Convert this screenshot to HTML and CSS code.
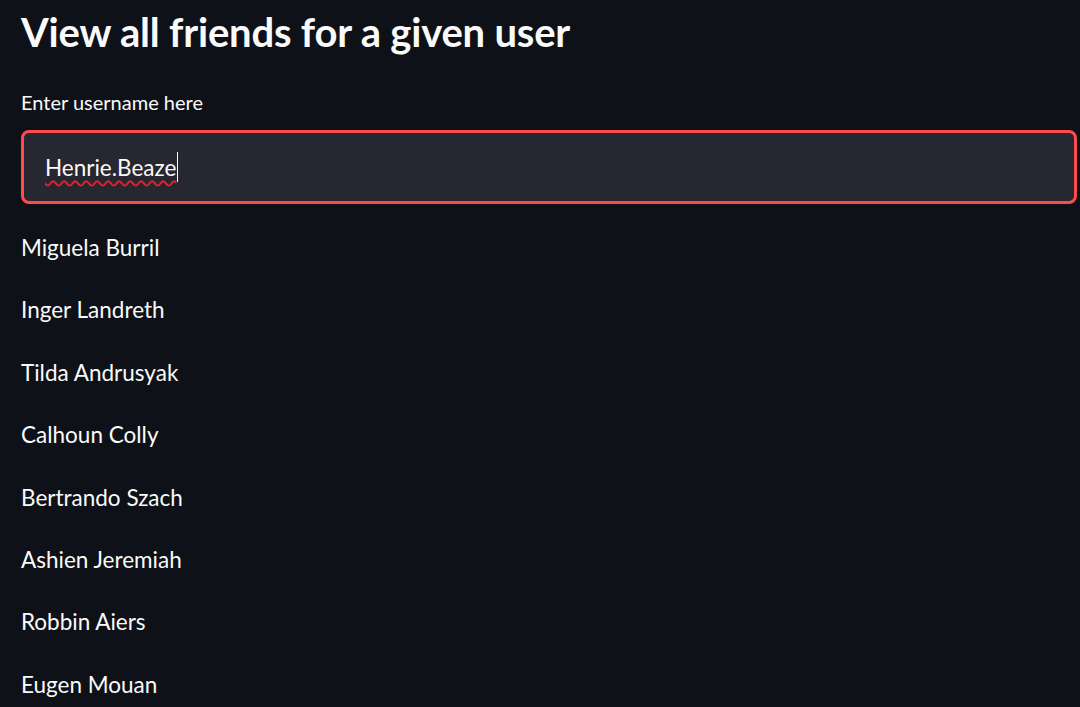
FILE: index.html
```html
<!DOCTYPE html>
<html lang="en">
<head>
<meta charset="utf-8">
<title>View all friends</title>
<link rel="stylesheet" href="styles.css">
</head>
<body>
<main class="app">
  <h1 class="title">View all friends for a given user</h1>
  <div class="field">
    <label class="field-label">Enter username here</label>
    <div class="input-box">
      <span class="input-text">Henrie.Beaze</span><span class="caret"></span>
    </div>
  </div>
  <ul class="friends">
    <li>Miguela Burril</li>
    <li>Inger Landreth</li>
    <li>Tilda Andrusyak</li>
    <li>Calhoun Colly</li>
    <li>Bertrando Szach</li>
    <li>Ashien Jeremiah</li>
    <li>Robbin Aiers</li>
    <li>Eugen Mouan</li>
  </ul>
</main>
</body>
</html>
```

FILE: styles.css
```css
html, body {
  margin: 0;
  padding: 0;
  background: #0e1117;
  height: 100%;
  overflow: hidden;
}
body {
  font-family: "Lato", "Liberation Sans", sans-serif;
  color: #fafafa;
}
.app {
  display: flex;
  flex-direction: column;
  padding: 0 3px 0 21px;
}
.title {
  margin: 0;
  padding-top: 6px;
  font-size: 40px;
  font-weight: 700;
  line-height: 52px;
  letter-spacing: -0.2px;
}
.field {
  display: flex;
  flex-direction: column;
  margin-top: 32px;
}
.field-label {
  font-size: 20px;
  line-height: 24px;
}
.input-box {
  margin-top: 16px;
  height: 74px;
  box-sizing: border-box;
  border: 3px solid #ff4b4b;
  border-radius: 8px;
  background: #262730;
  display: flex;
  align-items: center;
  padding-left: 21px;
}
.input-text {
  font-size: 22.5px;
  text-decoration: underline wavy #e8202a;
  text-decoration-thickness: 1.5px;
  text-underline-offset: 4px;
}
.caret {
  width: 1px;
  height: 30px;
  background: #fafafa;
  margin-left: 1px;
}
.friends {
  list-style: none;
  margin: 0;
  padding: 0;
  display: flex;
  flex-direction: column;
  gap: 30.4px;
  margin-top: 28px;
}
.friends li {
  font-size: 22.5px;
  line-height: 32px;
}
```
